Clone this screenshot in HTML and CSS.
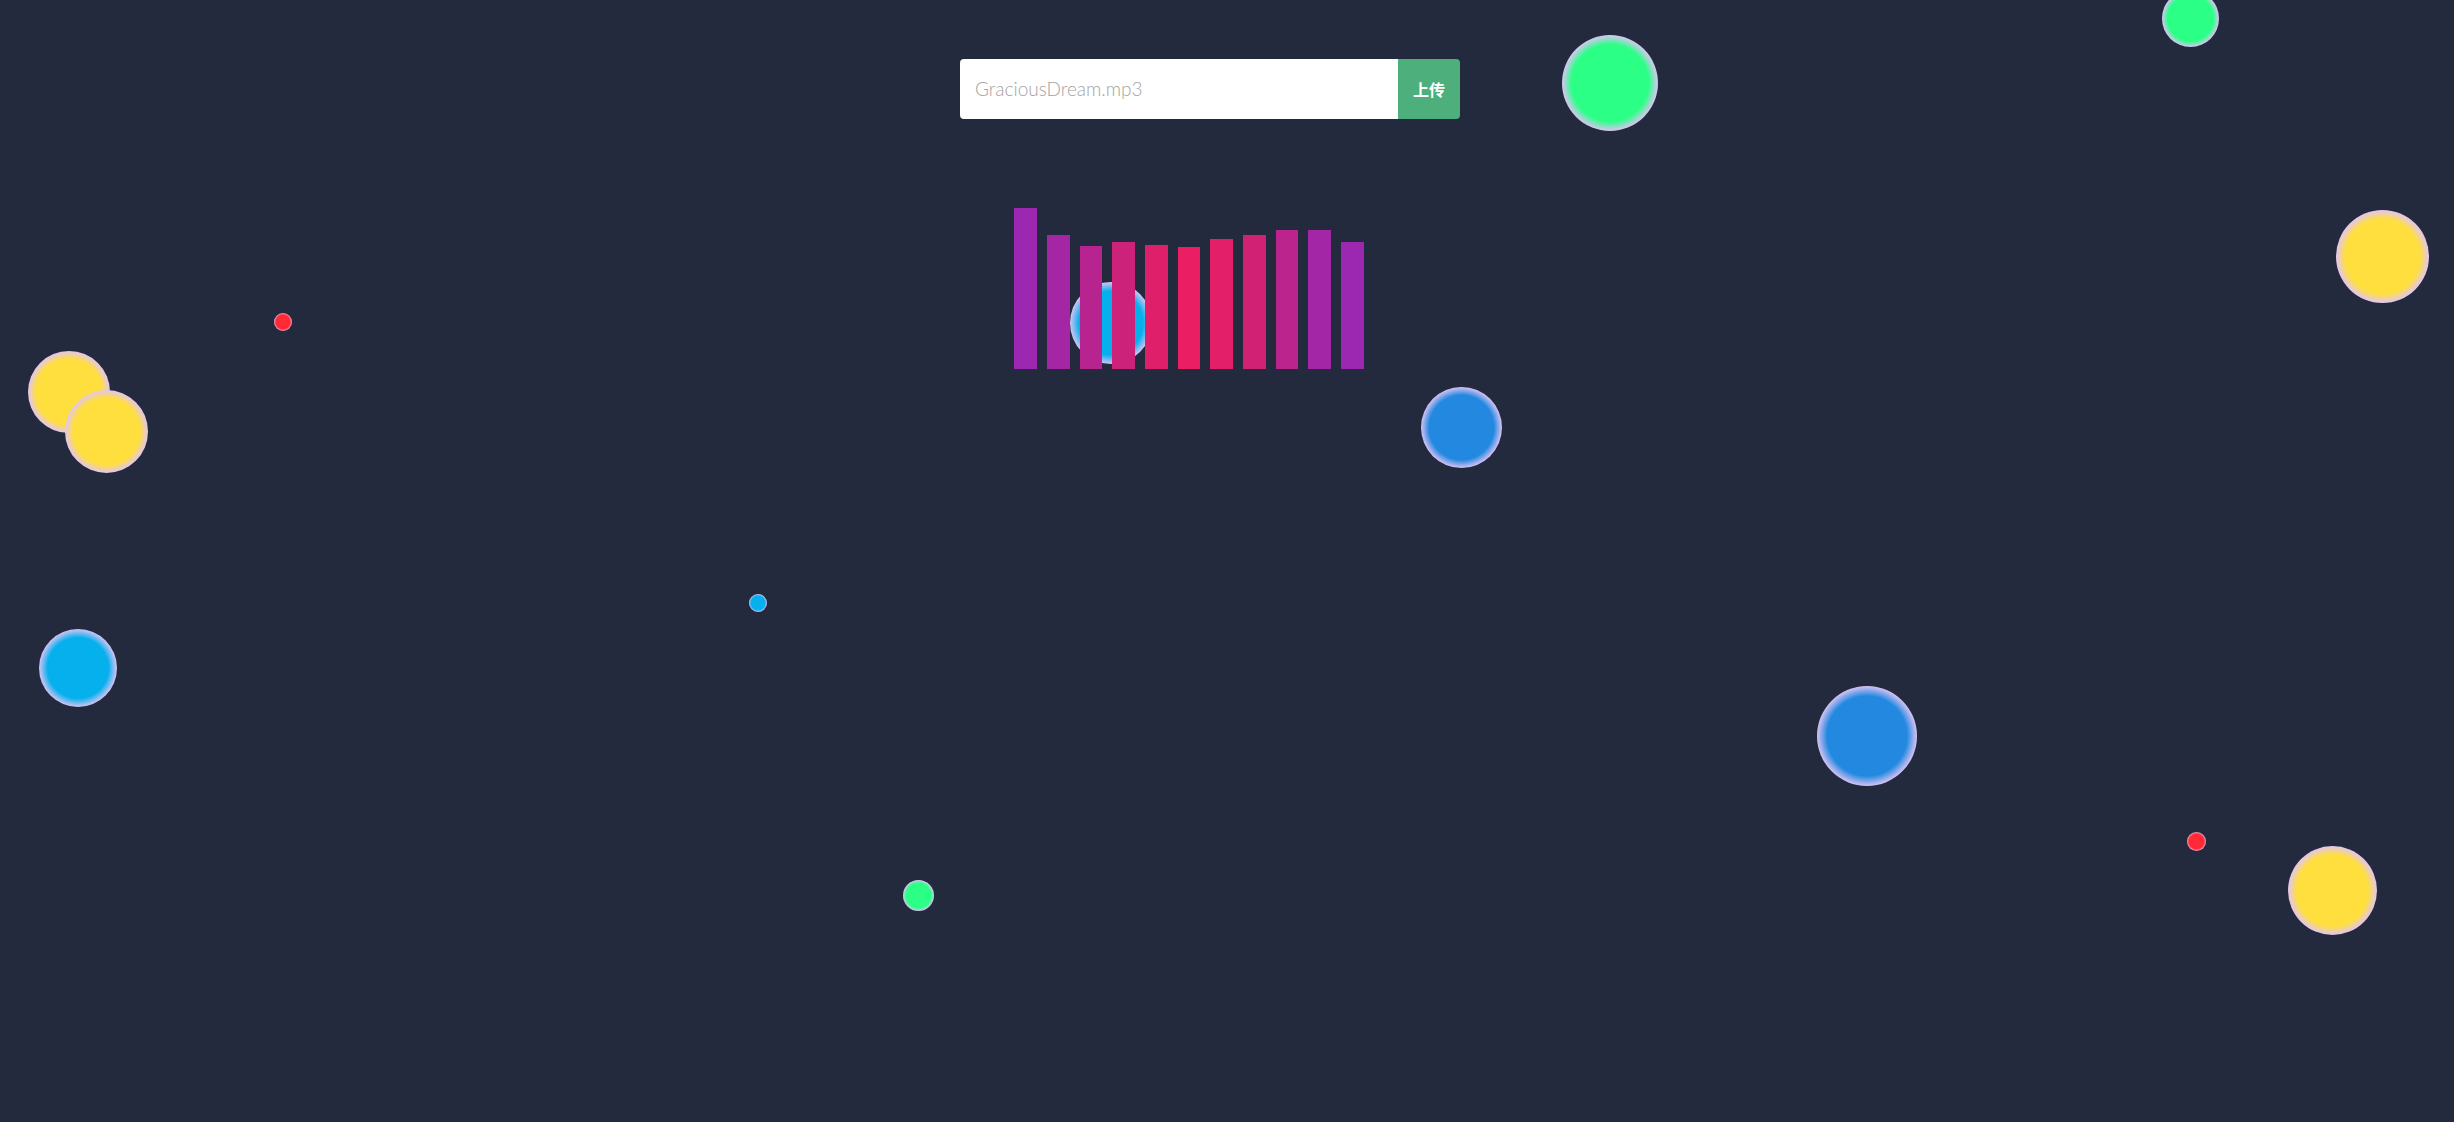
FILE: index.html
```html
<!DOCTYPE html>
<html lang="zh-CN">
<head>
<meta charset="utf-8">
<title>Music Visualizer</title>
<link rel="stylesheet" href="styles.css">
</head>
<body>
<div class="stage">
  <div class="bubbles">
    <span class="bubble green" style="left:1562px;top:35px;width:96px;height:96px"></span>
    <span class="bubble green" style="left:2162px;top:-10px;width:57px;height:57px"></span>
    <span class="bubble yellow" style="left:2336px;top:210px;width:93px;height:93px"></span>
    <span class="bubble yellow" style="left:28px;top:351px;width:82px;height:82px"></span>
    <span class="bubble yellow" style="left:65px;top:390px;width:83px;height:83px"></span>
    <span class="bubble red" style="left:274px;top:313px;width:18px;height:18px"></span>
    <span class="bubble cyan" style="left:1070px;top:282px;width:82px;height:82px"></span>
    <span class="bubble blue" style="left:1421px;top:387px;width:81px;height:81px"></span>
    <span class="bubble cyan" style="left:749px;top:594px;width:18px;height:18px"></span>
    <span class="bubble cyan" style="left:39px;top:629px;width:78px;height:78px"></span>
    <span class="bubble blue" style="left:1817px;top:686px;width:100px;height:100px"></span>
    <span class="bubble red" style="left:2187px;top:832px;width:19px;height:19px"></span>
    <span class="bubble green" style="left:903px;top:880px;width:31px;height:31px"></span>
    <span class="bubble yellow" style="left:2288px;top:846px;width:89px;height:89px"></span>
  </div>

  <div class="toolbar">
    <form class="upload">
      <input class="file-input" type="text" placeholder="GraciousDream.mp3">
      <button class="upload-btn" type="button">上传</button>
    </form>
  </div>

  <div class="spectrum">
    <span class="bar" style="height:161px;background:#9c27b0"></span>
    <span class="bar" style="height:134px;background:#a526a5"></span>
    <span class="bar" style="height:123px;background:#b8248f"></span>
    <span class="bar" style="height:127px;background:#cc2279"></span>
    <span class="bar" style="height:124px;background:#df1f69"></span>
    <span class="bar" style="height:122px;background:#e91e63"></span>
    <span class="bar" style="height:130px;background:#e21f68"></span>
    <span class="bar" style="height:134px;background:#d02175"></span>
    <span class="bar" style="height:139px;background:#ba248c"></span>
    <span class="bar" style="height:139px;background:#a326a6"></span>
    <span class="bar" style="height:127px;background:#9c27b0"></span>
  </div>
</div>
</body>
</html>
```

FILE: styles.css
```css
html, body {
  margin: 0;
  padding: 0;
  height: 100%;
}

body {
  background: #232a3e;
  overflow: hidden;
  font-family: "Lato", "Noto Sans CJK SC", sans-serif;
}

.stage {
  position: relative;
  width: 100%;
  height: 1122px;
  overflow: hidden;
}

.bubbles {
  position: absolute;
  inset: 0;
  z-index: 0;
}

.bubble {
  position: absolute;
  border-radius: 50%;
  display: block;
}

.bubble.green  { background: radial-gradient(closest-side, #2bff86 80%, #d9c6f2 100%); }
.bubble.yellow { background: radial-gradient(closest-side, #ffdf3d 80%, #e3c6ef 100%); }
.bubble.blue   { background: radial-gradient(closest-side, #2389e0 80%, #d7c2f4 100%); }
.bubble.cyan   { background: radial-gradient(closest-side, #06b0ed 78%, #d5c4f4 100%); }
.bubble.red    { background: radial-gradient(closest-side, #ff2a36 78%, #f2a6c6 100%); }

.toolbar {
  position: relative;
  z-index: 1;
  display: flex;
  justify-content: center;
  padding: 59px 34px 0 0;
}

.upload {
  display: flex;
  margin: 0;
  width: 500px;
  height: 60px;
}

.file-input {
  flex: 1;
  box-sizing: border-box;
  height: 60px;
  margin: 0;
  border: none;
  outline: none;
  border-radius: 4px 0 0 4px;
  background: #ffffff;
  padding: 0 15px 2px;
  font-family: "Lato", sans-serif;
  font-weight: 300;
  font-size: 19px;
  color: #333;
}

.file-input::placeholder {
  color: #a3a3a3;
}

.upload-btn {
  width: 62px;
  height: 60px;
  margin: 0;
  border: none;
  border-radius: 0 4px 4px 0;
  background: #4caf7c;
  color: #ffffff;
  font-family: "Noto Sans CJK SC", sans-serif;
  font-weight: 700;
  font-size: 16px;
  padding: 0;
}

.spectrum {
  position: relative;
  z-index: 1;
  display: flex;
  align-items: flex-end;
  justify-content: center;
  gap: 10px;
  height: 161px;
  margin-top: 89px;
  padding-right: 76px;
}

.bar {
  display: block;
  width: 22.7px;
}
```
